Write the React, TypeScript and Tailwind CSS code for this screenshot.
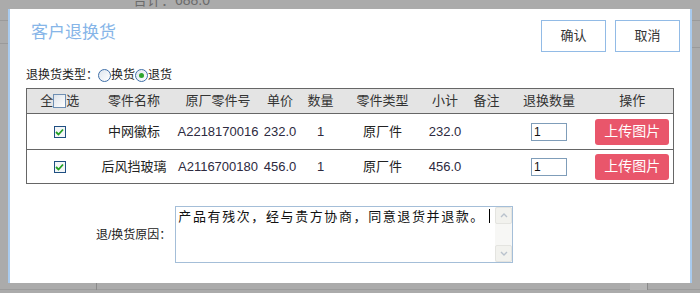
import React from 'react';

const rows = [
  { name: '中网徽标', code: 'A2218170016', price: '232.0', qty: '1', type: '原厂件', sub: '232.0', h: 'h-[36px]' },
  { name: '后风挡玻璃', code: 'A2116700180', price: '456.0', qty: '1', type: '原厂件', sub: '456.0', h: 'h-[34px]' },
];

function Radio({ checked }: { checked?: boolean }) {
  return (
    <span className="inline-flex h-[13px] w-[13px] items-center justify-center rounded-full border border-[#3f6fa8] bg-gradient-to-br from-[#dfe6ee] to-white">
      {checked && <span className="h-[5px] w-[5px] rounded-full bg-[#2ea52e]" />}
    </span>
  );
}

function CheckedBox() {
  return (
    <span className="inline-flex h-[12px] w-[12px] items-center justify-center border border-[#1f4f82] bg-[#f4f6f8]">
      <svg width="9" height="8" viewBox="0 0 9 8">
        <path d="M1 4 L3.5 6.5 L8 1.5" fill="none" stroke="#21a021" strokeWidth="1.8" />
      </svg>
    </span>
  );
}

export default function App() {
  return (
    <div className="relative h-[293px] w-[700px] overflow-hidden bg-[#ababab] font-['Liberation_Sans','Noto_Sans_CJK_SC',sans-serif] text-[#333]">
      {/* page behind the overlay */}
      <div className="absolute left-[133px] top-[-7px] text-[14px] leading-[14px] text-[#6b6b6b]">合计：688.0</div>
      <div className="absolute left-0 top-[20px] h-px w-[8px] bg-[#9a9a9a]" />
      <div className="absolute left-0 top-[43px] h-px w-[8px] bg-[#9a9a9a]" />
      <div className="absolute right-0 top-[20px] h-px w-[8px] bg-[#9a9a9a]" />
      <div className="absolute right-0 top-[47px] h-px w-[8px] bg-[#9a9a9a]" />
      <div className="absolute left-0 top-[289px] h-px w-[700px] bg-[#9c9c9c]" />
      <div className="absolute left-[96px] top-[283px] h-[7px] w-px bg-[#8a8a8a]" />
      <div className="absolute left-[630px] top-[283px] h-[7px] w-[18px] border-r border-[#8a8a8a] bg-[#b6b6b6]" />

      {/* modal */}
      <div className="absolute left-[8px] top-[9px] flex h-[274px] w-[684px] flex-col border-x-2 border-[#a9cbee] bg-white">
        <div className="flex items-start pt-[11px]">
          <div className="ml-[21px] mt-[1px] text-[17px] leading-[24px] text-[#86b5e8]">客户退换货</div>
          <div className="ml-auto mr-[10px] flex gap-[9px]">
            <button className="h-[32px] w-[65px] border border-[#92bbe6] text-[13px] text-[#333]">确认</button>
            <button className="h-[32px] w-[65px] border border-[#92bbe6] text-[13px] text-[#333]">取消</button>
          </div>
        </div>

        <div className="ml-[16px] mt-[15px] flex items-center text-[12px] leading-[16px] text-[#222]">
          <span>退换货类型：</span>
          <Radio />
          <span>换货</span>
          <Radio checked />
          <span>退货</span>
        </div>

        <table className="ml-[16px] mt-[5px] w-[647px] table-fixed border-collapse border border-[#666] text-[13px]">
          <colgroup>
            <col className="w-[66px]" />
            <col className="w-[83px]" />
            <col className="w-[85px]" />
            <col className="w-[39px]" />
            <col className="w-[42px]" />
            <col className="w-[82px]" />
            <col className="w-[43px]" />
            <col className="w-[40px]" />
            <col className="w-[85px]" />
            <col className="w-[82px]" />
          </colgroup>
          <thead>
            <tr className="h-[25px] bg-[#e4e4e4] text-[#333]">
              <th className="font-normal">
                <span className="inline-flex items-center">
                  全
                  <span className="inline-block h-[14px] w-[13px] border border-[#6f8fb3] bg-gradient-to-br from-[#dde3ea] to-white" />
                  选
                </span>
              </th>
              <th className="font-normal">零件名称</th>
              <th className="font-normal">原厂零件号</th>
              <th className="font-normal">单价</th>
              <th className="font-normal">数量</th>
              <th className="font-normal">零件类型</th>
              <th className="font-normal">小计</th>
              <th className="font-normal">备注</th>
              <th className="font-normal">退换数量</th>
              <th className="font-normal">操作</th>
            </tr>
          </thead>
          <tbody>
            {rows.map((r) => (
              <tr key={r.code} className={`${r.h} border-t border-[#666] text-[#2d2a40]`}>
                <td className="text-center">
                  <span className="inline-flex pt-[2px]"><CheckedBox /></span>
                </td>
                <td className="text-center text-[#222]">{r.name}</td>
                <td className="whitespace-nowrap text-center">{r.code}</td>
                <td className="text-center">{r.price}</td>
                <td className="text-center">{r.qty}</td>
                <td className="text-center text-[#222]">{r.type}</td>
                <td className="text-center">{r.sub}</td>
                <td />
                <td className="text-center">
                  <input
                    readOnly
                    value="1"
                    className="h-[18px] w-[36px] border border-[#7f9db9] px-[2px] text-[12px] text-[#111] outline-none"
                  />
                </td>
                <td className="text-center">
                  <button className="h-[26px] w-[74px] rounded-[3px] bg-[#e9566b] text-[14px] text-white">上传图片</button>
                </td>
              </tr>
            ))}
          </tbody>
        </table>

        <div className="mt-[22px] flex items-center">
          <span className="ml-[86px] text-[12px] text-[#222]">退/换货原因：</span>
          <div className="ml-[4px] flex h-[57px] w-[338px] border border-[#a4bed8]">
            <div className="relative flex-1 pl-[2px] pt-[1px] text-[13px] leading-[16px] tracking-[1.6px] text-[#111] font-['Noto_Sans_CJK_SC',sans-serif]">
              产品有残次，经与贵方协商，同意退货并退款。
              <span className="absolute left-[313px] top-[2px] h-[14px] w-px bg-black" />
            </div>
            <div className="flex w-[17px] flex-col justify-between bg-[#f7f7f5]">
              <div className="flex h-[17px] items-center justify-center rounded-[2px] border border-[#e4e4e0] bg-[#f2f2ee]">
                <svg width="8" height="5" viewBox="0 0 8 5"><path d="M1 4 L4 1 L7 4" fill="none" stroke="#b9c2cc" strokeWidth="1.4" /></svg>
              </div>
              <div className="flex h-[17px] items-center justify-center rounded-[2px] border border-[#e4e4e0] bg-[#f2f2ee]">
                <svg width="8" height="5" viewBox="0 0 8 5"><path d="M1 1 L4 4 L7 1" fill="none" stroke="#b9c2cc" strokeWidth="1.4" /></svg>
              </div>
            </div>
          </div>
        </div>
      </div>
    </div>
  );
}
